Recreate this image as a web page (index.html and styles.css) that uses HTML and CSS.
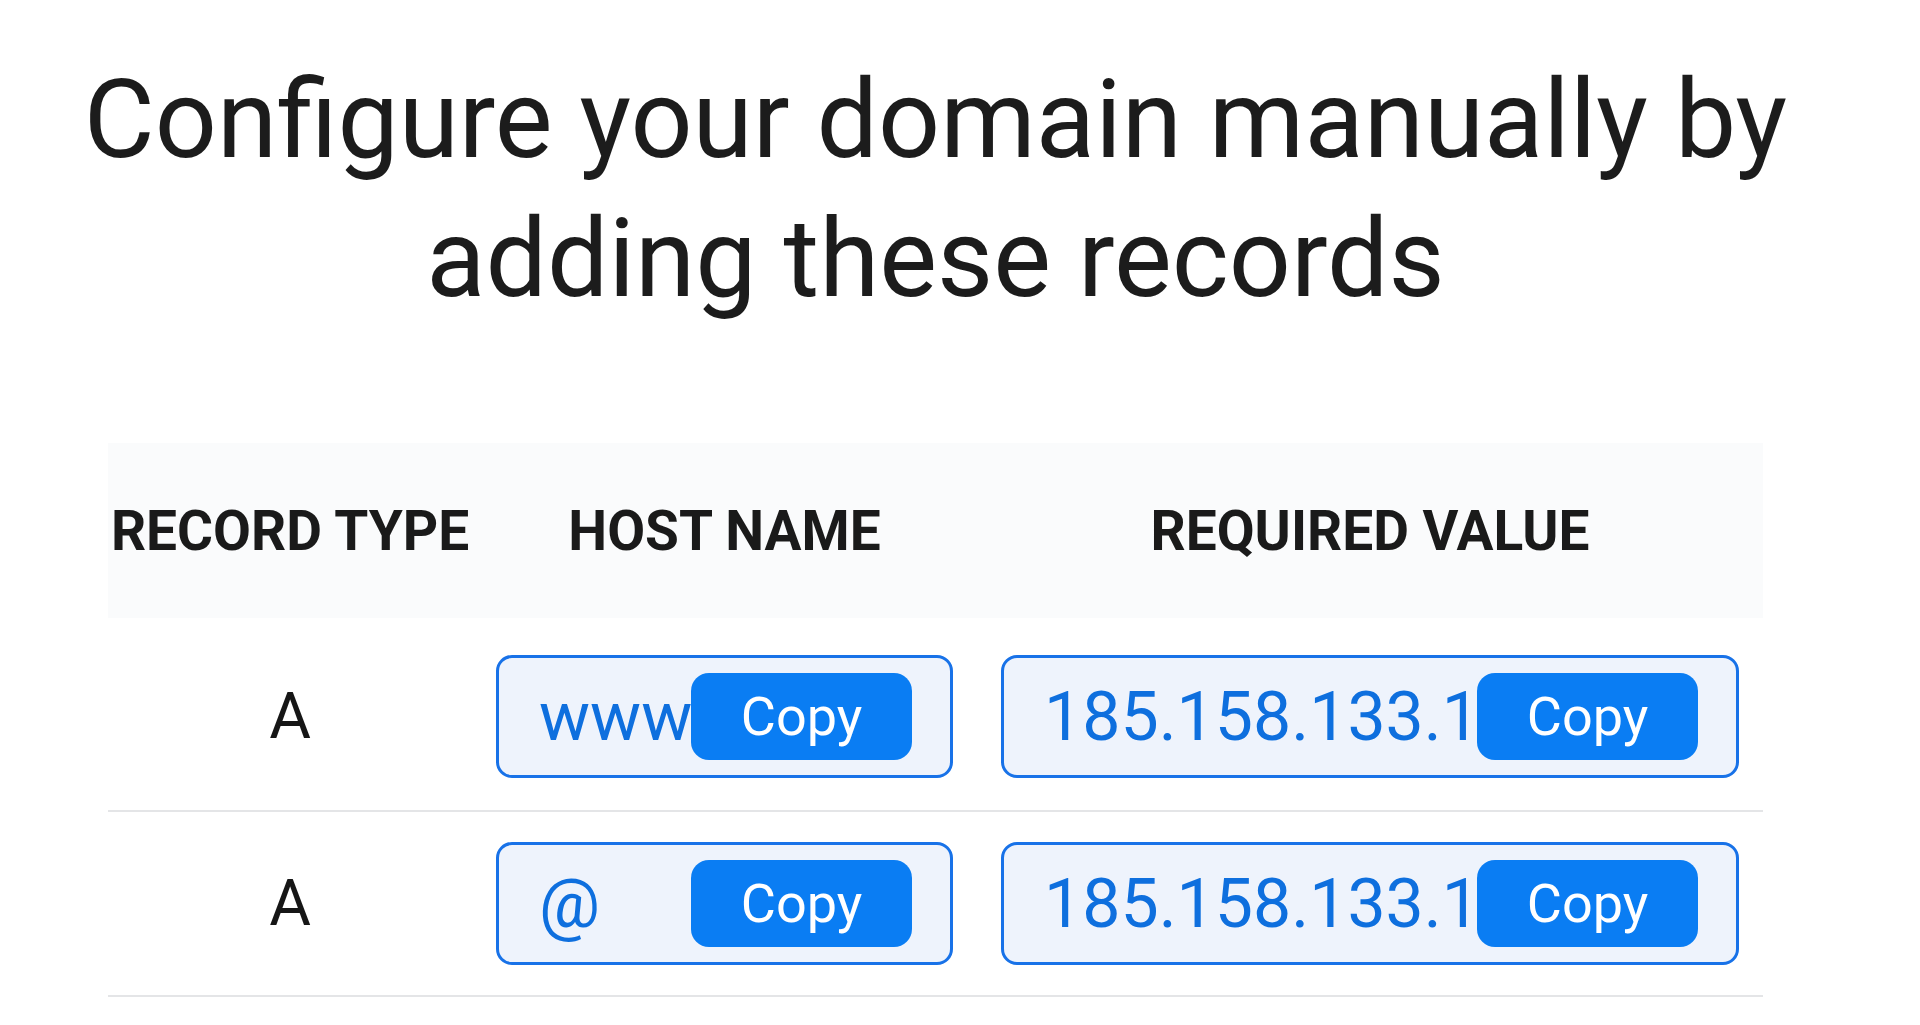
FILE: index.html
```html
<!DOCTYPE html>
<html lang="en">
<head>
  <meta charset="UTF-8">
  <meta name="viewport" content="width=device-width, initial-scale=1.0">
  <title>Configure your domain</title>
  <link rel="stylesheet" href="styles.css">
</head>
<body>
  <div class="page">
    <h1 class="title">Configure your domain manually by adding these records</h1>

    <div class="records">
      <div class="records-head">
        <div class="cell cell-type">RECORD TYPE</div>
        <div class="cell">HOST NAME</div>
        <div class="cell">REQUIRED VALUE</div>
      </div>

      <div class="record-row first">
        <div class="cell cell-type record-type">A</div>
        <div class="cell">
          <div class="copy-field">
            <input class="copy-input" type="text" value="www" readonly>
            <button class="copy-button">Copy</button>
          </div>
        </div>
        <div class="cell">
          <div class="copy-field">
            <input class="copy-input" type="text" value="185.158.133.1" readonly>
            <button class="copy-button">Copy</button>
          </div>
        </div>
      </div>

      <div class="record-row">
        <div class="cell cell-type record-type">A</div>
        <div class="cell">
          <div class="copy-field">
            <input class="copy-input" type="text" value="@" readonly>
            <button class="copy-button">Copy</button>
          </div>
        </div>
        <div class="cell">
          <div class="copy-field">
            <input class="copy-input" type="text" value="185.158.133.1" readonly>
            <button class="copy-button">Copy</button>
          </div>
        </div>
      </div>
    </div>
  </div>
</body>
</html>
```

FILE: styles.css
```css
body {
  margin: 0;
  padding: 0;
  font-family: Roboto, "Liberation Sans", sans-serif;
  background-color: #FFFFFF;
  color: #1A1A1A;
}

.page {
  width: 1871px;
  padding-top: 51px;
}

.title {
  margin: 0;
  font-size: 109px;
  font-weight: 400;
  line-height: 139px;
  text-align: center;
  color: #1C1C1C;
}

.records {
  margin: 114px 108px 0 108px;
}

.records-head,
.record-row {
  display: grid;
  grid-template-columns: 364px 505px 1fr;
  align-items: center;
}

.records-head {
  height: 175px;
  background-color: #FAFBFC;
  font-size: 55px;
  font-weight: 700;
  color: #1A1A1A;
}

.record-row {
  padding: 30px 0;
  border-bottom: 2px solid #E4E5E7;
}

.record-row.first {
  padding: 37px 0 32px 0;
}

.cell {
  padding: 0 24px;
  text-align: center;
  white-space: nowrap;
}

.cell-type {
  padding: 0;
}

.record-type {
  font-size: 64px;
  color: #161616;
}

.copy-field {
  position: relative;
  height: 123px;
  border: 3px solid #1872E8;
  border-radius: 16px;
  background-color: #EEF3FC;
  box-sizing: border-box;
  overflow: hidden;
}

.copy-input {
  width: 100%;
  height: 100%;
  padding: 0 0 0 40px;
  border: none;
  background: transparent;
  font-family: inherit;
  font-size: 68px;
  color: #0E6FDE;
  box-sizing: border-box;
  outline: none;
}

.copy-button {
  position: absolute;
  top: 15px;
  right: 38px;
  width: 221px;
  height: 87px;
  border: none;
  border-radius: 18px;
  background-color: #0A7DF3;
  color: #FFFFFF;
  font-family: inherit;
  font-size: 54px;
  cursor: pointer;
}
```
